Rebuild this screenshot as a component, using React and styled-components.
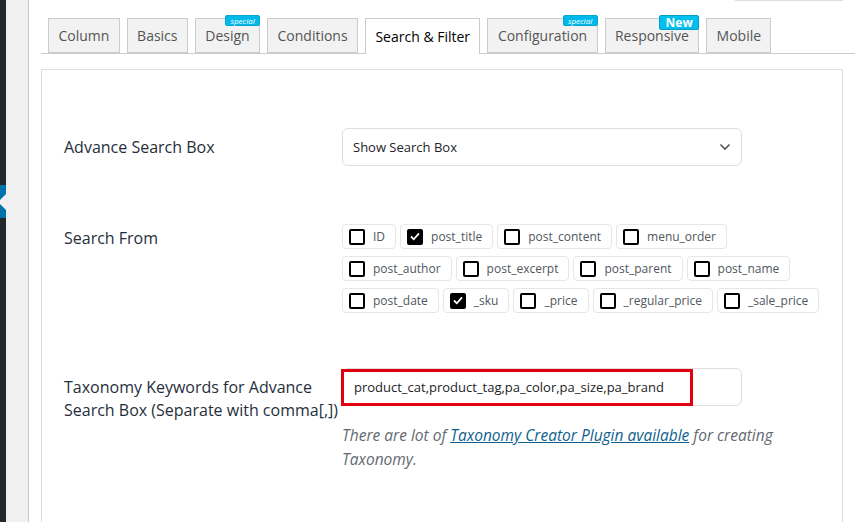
import React from 'react'
import styled, { createGlobalStyle } from 'styled-components'

const GlobalStyle = createGlobalStyle`
  html, body { margin: 0; padding: 0; background: #fff; }
  body { font-family: "Open Sans", "Noto Sans", sans-serif; }
  * { box-sizing: border-box; }
`

const tabs = [
  { label: 'Column' },
  { label: 'Basics' },
  { label: 'Design', badge: 'special' },
  { label: 'Conditions' },
  { label: 'Search & Filter', active: true },
  { label: 'Configuration', badge: 'special' },
  { label: 'Responsive', badge: 'New' },
  { label: 'Mobile' },
]

const fieldRows = [
  [['ID'], ['post_title', true], ['post_content'], ['menu_order']],
  [['post_author'], ['post_excerpt'], ['post_parent'], ['post_name']],
  [['post_date'], ['_sku', true], ['_price'], ['_regular_price'], ['_sale_price']],
]

const Page = styled.div`
  display: flex;
  width: 855px;
  height: 522px;
  overflow: hidden;
`

const AdminMenu = styled.div`
  width: 6px;
  flex-shrink: 0;
  background: #23282d;
  padding-top: 185px;
`

const CurrentItem = styled.div`
  position: relative;
  height: 33px;
  background: #0073aa;
  &:after {
    content: '';
    position: absolute;
    right: 0;
    top: 9px;
    border: 8px solid transparent;
    border-right-color: #f1f1f1;
  }
`

const Gutter = styled.div`
  width: 23px;
  flex-shrink: 0;
  background: #f0f0f1;
  border-right: 1px solid #c8c8c8;
`

const Main = styled.div`
  flex: 1;
  padding-left: 12px;
  background: #fff;
  display: flex;
  flex-direction: column;
`

const TopStrip = styled.div`
  height: 18px;
  display: flex;
  justify-content: flex-end;
  padding-right: 12px;
`

const TopBoxEdge = styled.div`
  width: 108px;
  height: 2px;
  border-bottom: 1px solid #ddd;
  margin-top: -1px;
`

const TabBar = styled.div`
  display: flex;
  gap: 7px;
  padding-left: 7px;
  border-bottom: 1px solid #ccc;
  height: 36px;
`

const Tab = styled.div`
  position: relative;
  height: ${p => (p.$active ? '36px' : '35px')};
  padding: 0 9.4px;
  display: flex;
  align-items: center;
  font-size: 14px;
  color: ${p => (p.$active ? '#000' : '#555')};
  background: ${p => (p.$active ? '#fff' : '#f2f2f2')};
  border: 1px solid #ccc;
  border-bottom: ${p => (p.$active ? 'none' : '1px solid #ccc')};
  padding-bottom: ${p => (p.$active ? '1px' : '0')};
  white-space: nowrap;
`

const SpecialBadge = styled.span`
  position: absolute;
  top: -4px;
  right: -1px;
  width: 35px;
  height: 11px;
  border-radius: 2px;
  background: #00b9eb;
  border: 1px solid #0aa6d0;
  color: #fff;
  font-size: 8px;
  font-style: italic;
  line-height: 9px;
  text-align: center;
`

const NewBadge = styled.span`
  position: absolute;
  top: -4px;
  right: -1px;
  width: 40px;
  height: 15px;
  border-radius: 2px;
  background: #00c0ef;
  border: 1px solid #0a9cc4;
  color: #fff;
  font-size: 12px;
  font-weight: 700;
  line-height: 13px;
  text-align: center;
`

const Panel = styled.div`
  margin: 15px 12px 0 0;
  flex: 1;
  border: 1px solid #ddd;
  border-bottom: none;
  padding: 58px 0 0 22px;
`

const Row = styled.div`
  display: grid;
  grid-template-columns: 278px 1fr;
  align-items: ${p => p.$align || 'center'};
  margin-bottom: ${p => p.$gap || 0}px;
`

const Label = styled.div`
  font-size: 16px;
  line-height: 23px;
  color: #1f2f3b;
  padding-top: ${p => p.$top || 0}px;
`

const SelectBox = styled.div`
  width: 400px;
  height: 38px;
  border: 1px solid #ddd;
  border-radius: 6px;
  display: flex;
  align-items: center;
  justify-content: space-between;
  padding: 0 10px 0 10px;
  font-size: 13px;
  color: #1d2327;
`

const FieldList = styled.div`
  display: flex;
  flex-direction: column;
  gap: 7px;
`

const ChipRow = styled.div`
  display: flex;
  gap: 4px;
`

const Chip = styled.label`
  height: 25px;
  display: flex;
  align-items: center;
  gap: 8px;
  padding: 0 10px 0 6px;
  border: 1px solid #e6e6e6;
  border-radius: 4px;
  font-size: 12px;
  color: #50575e;
`

const Box = styled.span`
  width: 16px;
  height: 16px;
  border: 2px solid #000;
  border-radius: 2px;
  background: ${p => (p.$on ? '#000' : '#fff')};
  display: flex;
  align-items: center;
  justify-content: center;
`

const InputWrap = styled.div`
  position: relative;
  width: 400px;
`

const TextInput = styled.div`
  height: 38px;
  border: 1px solid #ddd;
  border-radius: 6px;
  display: flex;
  align-items: center;
  padding-left: 11px;
  font-size: 13px;
  color: #1d2327;
`

const Highlight = styled.div`
  position: absolute;
  left: -1px;
  top: 1px;
  width: 352px;
  height: 37px;
  border: 3px solid #e2000f;
`

const Help = styled.p`
  margin: 17px 0 0;
  width: 445px;
  font-size: 15.5px;
  font-style: italic;
  line-height: 24px;
  color: #646970;
  a { color: #0f5f8e; text-decoration: underline; }
`

function Chevron() {
  return (
    <svg width="12" height="8" viewBox="0 0 12 8">
      <path d="M1.5 1.5 L6 6 L10.5 1.5" fill="none" stroke="#555" strokeWidth="1.6" />
    </svg>
  )
}

function Tick() {
  return (
    <svg width="10" height="9" viewBox="0 0 10 9">
      <path d="M1 4.5 L3.8 7.3 L9 1.3" fill="none" stroke="#fff" strokeWidth="1.8" />
    </svg>
  )
}

export default function App() {
  return (
    <Page>
      <GlobalStyle />
      <AdminMenu>
        <CurrentItem />
      </AdminMenu>
      <Gutter />
      <Main>
        <TopStrip>
          <TopBoxEdge />
        </TopStrip>
        <TabBar>
          {tabs.map(t => (
            <Tab key={t.label} $active={t.active}>
              {t.label}
              {t.badge === 'special' && <SpecialBadge>special</SpecialBadge>}
              {t.badge === 'New' && <NewBadge>New</NewBadge>}
            </Tab>
          ))}
        </TabBar>
        <Panel>
          <Row $gap={58}>
            <Label>Advance Search Box</Label>
            <SelectBox>
              <span>Show Search Box</span>
              <Chevron />
            </SelectBox>
          </Row>
          <Row $align="start" $gap={55}>
            <Label $top={3}>Search From</Label>
            <FieldList>
              {fieldRows.map((row, i) => (
                <ChipRow key={i}>
                  {row.map(([name, on]) => (
                    <Chip key={name}>
                      <Box $on={on}>{on && <Tick />}</Box>
                      {name}
                    </Chip>
                  ))}
                </ChipRow>
              ))}
            </FieldList>
          </Row>
          <Row $align="start">
            <Label $top={8}>Taxonomy Keywords for Advance Search Box (Separate with comma[,])</Label>
            <div>
              <InputWrap>
                <TextInput>product_cat,product_tag,pa_color,pa_size,pa_brand</TextInput>
                <Highlight />
              </InputWrap>
              <Help>
                There are lot of <a href="#">Taxonomy Creator Plugin available</a> for creating Taxonomy.
              </Help>
            </div>
          </Row>
        </Panel>
      </Main>
    </Page>
  )
}
